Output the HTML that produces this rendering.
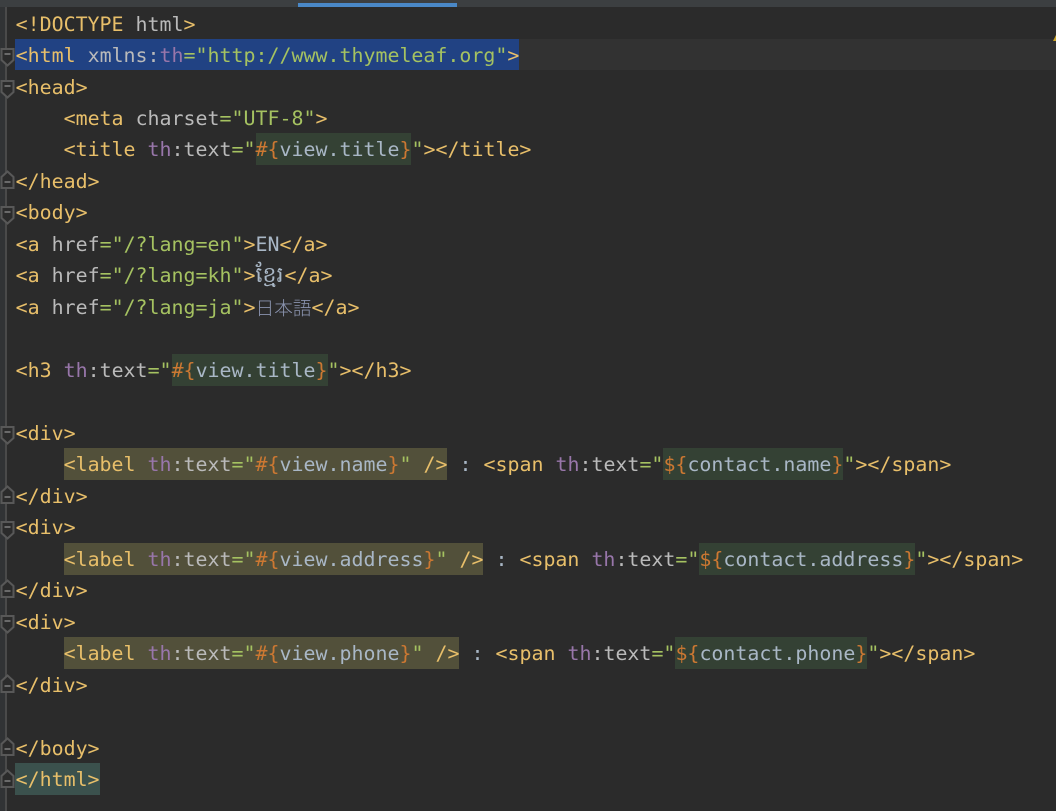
<!DOCTYPE html>
<html><head><meta charset="utf-8"><style>
html,body{margin:0;padding:0;background:#2b2b2b}
#p{position:relative;width:1056px;height:811px;overflow:hidden;background:#2b2b2b;font-family:"DejaVu Sans Mono","Liberation Mono","Noto Sans CJK JP",monospace;font-size:19.93px;color:#a9b7c6}
.l{position:absolute;left:15.6px;height:32px;line-height:33px;white-space:pre}
.t{color:#e8bf6a}.a{color:#bababa}.n{color:#9876aa}.s{color:#a5c261}.o{color:#cc7832}
.g{background:#344134;display:inline-block;height:32px}
.y{background:#52503a;display:inline-block;height:32px}
.sl{background:#214283;display:inline-block;height:31px;margin-left:-1px;padding-left:1px}
.m{background:#3b514d;display:inline-block;height:32px;margin-left:-1px;padding-left:1px}
.b{position:absolute}
</style></head><body><div id="p">
<div class="b" style="left:0;top:0;width:1056px;height:7px;background:#3c3f41"></div>
<div class="b" style="left:298px;top:3px;width:159px;height:4px;background:#4a88c7"></div>
<div class="b" style="left:0;top:7px;width:5px;height:804px;background:#313335"></div>
<div class="b" style="left:15px;top:39px;width:1041px;height:31px;background:#323232"></div>
<div class="b" style="left:5px;top:7px;width:2px;height:804px;background:#4a4a4a"></div>
<svg class="b" style="left:0;top:0" width="16" height="811" fill="#2b2b2b" stroke="#585858" stroke-width="2">
<defs><g id="d"><path d="M1.5 -8H13.5V3L7.5 8.5L1.5 3Z"/><path d="M4.5 -3H10.5" stroke="#6a6a6a"/></g><g id="u"><path d="M1.5 8H13.5V-3L7.5 -8.5L1.5 -3Z"/><path d="M4.5 2H10.5" stroke="#6a6a6a"/></g></defs>
<use href="#d" y="57"/><use href="#d" y="89"/><use href="#d" y="215"/><use href="#d" y="435"/><use href="#d" y="530"/><use href="#d" y="624"/>
<use href="#u" y="180"/><use href="#u" y="495"/><use href="#u" y="589"/><use href="#u" y="684"/><use href="#u" y="747"/><use href="#u" y="779"/>
</svg>
<svg class="b" style="left:1040px;top:27px" width="16" height="16"><path d="M13 14L16 8V14Z" fill="#c9a227"/></svg>

<div class="l" style="top:8px"><span class="t">&lt;!DOCTYPE</span> <span class="a">html</span><span class="t">&gt;</span></div>
<div class="l" style="top:39px"><span class="sl"><span class="t">&lt;html</span> <span class="a">xmlns:</span><span class="n">th</span><span class="s">="http://www.thymeleaf.org"</span><span class="t">&gt;</span></span></div>
<div class="l" style="top:71px"><span class="t">&lt;head&gt;</span></div>
<div class="l" style="top:102px">    <span class="t">&lt;meta</span> <span class="a">charset</span><span class="s">="UTF-8"</span><span class="t">&gt;</span></div>
<div class="l" style="top:133px">    <span class="t">&lt;title</span> <span class="n">th</span><span class="a">:text</span><span class="s">="</span><span class="g"><span class="o">#{</span>view.title<span class="o">}</span></span><span class="s">"</span><span class="t">&gt;&lt;/title&gt;</span></div>
<div class="l" style="top:165px"><span class="t">&lt;/head&gt;</span></div>
<div class="l" style="top:196px"><span class="t">&lt;body&gt;</span></div>
<div class="l" style="top:228px"><span class="t">&lt;a</span> <span class="a">href</span><span class="s">="/?lang=en"</span><span class="t">&gt;</span>EN<span class="t">&lt;/a&gt;</span></div>
<div class="l" style="top:259px"><span class="t">&lt;a</span> <span class="a">href</span><span class="s">="/?lang=kh"</span><span class="t">&gt;</span><span style="display:inline-block;width:29px;font-size:22px;height:32px;vertical-align:top">ខ្មែរ</span><span class="t">&lt;/a&gt;</span></div>
<div class="l" style="top:291px"><span class="t">&lt;a</span> <span class="a">href</span><span class="s">="/?lang=ja"</span><span class="t">&gt;</span><span style="display:inline-block;width:56px;font-size:18.7px;vertical-align:top;color:#8a93ae;font-family:'Noto Sans CJK JP',sans-serif;font-weight:300">日本語</span><span class="t">&lt;/a&gt;</span></div>
<div class="l" style="top:354px"><span class="t">&lt;h3</span> <span class="n">th</span><span class="a">:text</span><span class="s">="</span><span class="g"><span class="o">#{</span>view.title<span class="o">}</span></span><span class="s">"</span><span class="t">&gt;&lt;/h3&gt;</span></div>
<div class="l" style="top:417px"><span class="t">&lt;div&gt;</span></div>
<div class="l" style="top:448px">    <span class="y"><span class="t">&lt;label</span> <span class="n">th</span><span class="a">:text</span><span class="s">="</span><span class="o">#{</span>view.name<span class="o">}</span><span class="s">"</span> <span class="t">/&gt;</span></span> : <span class="t">&lt;span</span> <span class="n">th</span><span class="a">:text</span><span class="s">="</span><span class="g"><span class="o">${</span>contact.name<span class="o">}</span></span><span class="s">"</span><span class="t">&gt;&lt;/span&gt;</span></div>
<div class="l" style="top:480px"><span class="t">&lt;/div&gt;</span></div>
<div class="l" style="top:511px"><span class="t">&lt;div&gt;</span></div>
<div class="l" style="top:543px">    <span class="y"><span class="t">&lt;label</span> <span class="n">th</span><span class="a">:text</span><span class="s">="</span><span class="o">#{</span>view.address<span class="o">}</span><span class="s">"</span> <span class="t">/&gt;</span></span> : <span class="t">&lt;span</span> <span class="n">th</span><span class="a">:text</span><span class="s">="</span><span class="g"><span class="o">${</span>contact.address<span class="o">}</span></span><span class="s">"</span><span class="t">&gt;&lt;/span&gt;</span></div>
<div class="l" style="top:574px"><span class="t">&lt;/div&gt;</span></div>
<div class="l" style="top:606px"><span class="t">&lt;div&gt;</span></div>
<div class="l" style="top:637px">    <span class="y"><span class="t">&lt;label</span> <span class="n">th</span><span class="a">:text</span><span class="s">="</span><span class="o">#{</span>view.phone<span class="o">}</span><span class="s">"</span> <span class="t">/&gt;</span></span> : <span class="t">&lt;span</span> <span class="n">th</span><span class="a">:text</span><span class="s">="</span><span class="g"><span class="o">${</span>contact.phone<span class="o">}</span></span><span class="s">"</span><span class="t">&gt;&lt;/span&gt;</span></div>
<div class="l" style="top:669px"><span class="t">&lt;/div&gt;</span></div>
<div class="l" style="top:732px"><span class="t">&lt;/body&gt;</span></div>
<div class="l" style="top:763px"><span class="m"><span class="t">&lt;/html&gt;</span></span></div>
</div></body></html>
